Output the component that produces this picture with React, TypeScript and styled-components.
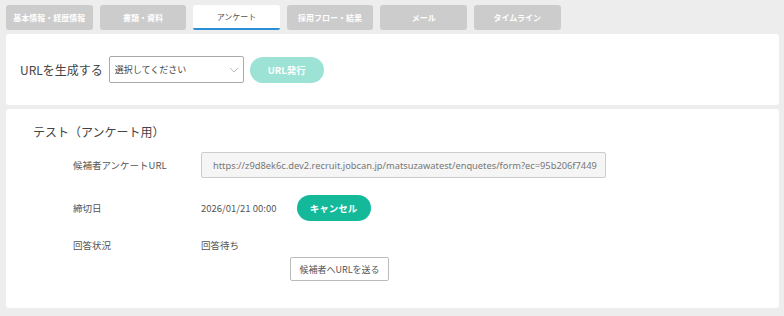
import styled, {createGlobalStyle} from "styled-components";

const GlobalStyle = createGlobalStyle`
    html, body {
        margin: 0;
        padding: 0;
        background: #ededed;
        font-family: "Noto Sans CJK JP", "Noto Sans", sans-serif;
        color: #555;
    }
`

const tabs = ['基本情報・経歴情報', '書類・資料', 'アンケート', '採用フロー・結果', 'メール', 'タイムライン'];

const Page = styled.div`
    width: 773px;
    padding: 5px 5px 0 6px;
`

const TabBar = styled.div`
    display: flex;
    gap: 7px;
    margin-bottom: 4px;
`

const Tab = styled.div<{ $active?: boolean }>`
    width: 86.6px;
    height: 25px;
    box-sizing: border-box;
    display: flex;
    align-items: center;
    justify-content: center;
    font-size: 8px;
    font-weight: ${({$active}) => $active ? 400 : 700};
    color: ${({$active}) => $active ? '#555' : '#fff'};
    background: ${({$active}) => $active ? '#fff' : '#cccccc'};
    border-bottom: ${({$active}) => $active ? '2px solid #2b8fd6' : 'none'};
    border-radius: ${({$active}) => $active ? '3px 3px 2px 2px' : '3px'};
    white-space: nowrap;
`

const Card = styled.div`
    background: #fff;
    border-radius: 3px;
    margin-bottom: 4px;
`

const GenerateCard = styled(Card)`
    height: 71px;
    display: flex;
    align-items: center;
    padding-left: 14px;
    gap: 6px;
`

const GenerateLabel = styled.span`
    font-size: 12px;
    color: #444;
`

const Select = styled.div`
    width: 135px;
    height: 27px;
    box-sizing: border-box;
    border: 1px solid #aaa;
    border-radius: 2px;
    display: flex;
    align-items: center;
    justify-content: space-between;
    padding: 0 4px 0 5px;
    font-size: 9px;
    color: #444;
`

const PillButton = styled.button<{ $color: string }>`
    height: 26px;
    width: 74px;
    border: none;
    border-radius: 13px;
    background: ${({$color}) => $color};
    color: #fff;
    font-family: inherit;
    font-size: 9.5px;
    font-weight: 700;
    padding: 0;
`

const SurveyCard = styled(Card)`
    height: 199px;
    box-sizing: border-box;
    padding: 14px 0 0 27px;
`

const SurveyTitle = styled.h3`
    margin: 0 0 12px;
    font-size: 12px;
    font-weight: 400;
    color: #444;
`

const Rows = styled.div`
    padding-left: 40px;
    display: grid;
    grid-template-columns: 128px auto;
    row-gap: 17px;
    align-items: center;
`

const Label = styled.span`
    font-size: 9.5px;
    color: #555;
`

const Value = styled.div`
    display: flex;
    align-items: center;
    gap: 20px;
    font-size: 9.5px;
    color: #555;
`

const UrlBox = styled.div`
    width: 405px;
    height: 26px;
    box-sizing: border-box;
    border: 1px solid #ccc;
    border-radius: 2px;
    background: #f5f5f5;
    display: flex;
    align-items: center;
    padding-left: 11px;
    font-family: "Noto Sans", sans-serif;
    font-size: 9.3px;
    color: #777;
    white-space: nowrap;
    overflow: hidden;
`

const SendRow = styled.div`
    display: flex;
    padding-left: 257px;
    margin-top: 5px;
`

const SendButton = styled.button`
    width: 99px;
    height: 24px;
    border: 1px solid #bbb;
    border-radius: 2px;
    background: #fff;
    font-family: inherit;
    font-size: 9px;
    color: #555;
    padding: 0;
`

const Chevron = () => (
    <svg width="10" height="6" viewBox="0 0 10 6">
        <path d="M1 1 L5 5 L9 1" fill="none" stroke="#bbb" strokeWidth="1"/>
    </svg>
)

export default function App() {
    return (
        <Page>
            <GlobalStyle/>
            <TabBar>
                {tabs.map(t => <Tab key={t} $active={t === 'アンケート'}>{t}</Tab>)}
            </TabBar>

            <GenerateCard>
                <GenerateLabel>URLを生成する</GenerateLabel>
                <Select>
                    <span>選択してください</span>
                    <Chevron/>
                </Select>
                <PillButton $color="#9de3d5">URL発行</PillButton>
            </GenerateCard>

            <SurveyCard>
                <SurveyTitle>テスト（アンケート用）</SurveyTitle>
                <Rows>
                    <Label>候補者アンケートURL</Label>
                    <UrlBox>https://z9d8ek6c.dev2.recruit.jobcan.jp/matsuzawatest/enquetes/form?ec=95b206f7449</UrlBox>

                    <Label>締切日</Label>
                    <Value>
                        <span>2026/01/21 00:00</span>
                        <PillButton $color="#14b99a">キャンセル</PillButton>
                    </Value>

                    <Label>回答状況</Label>
                    <Value>回答待ち</Value>
                </Rows>
                <SendRow>
                    <SendButton>候補者へURLを送る</SendButton>
                </SendRow>
            </SurveyCard>
        </Page>
    )
}
